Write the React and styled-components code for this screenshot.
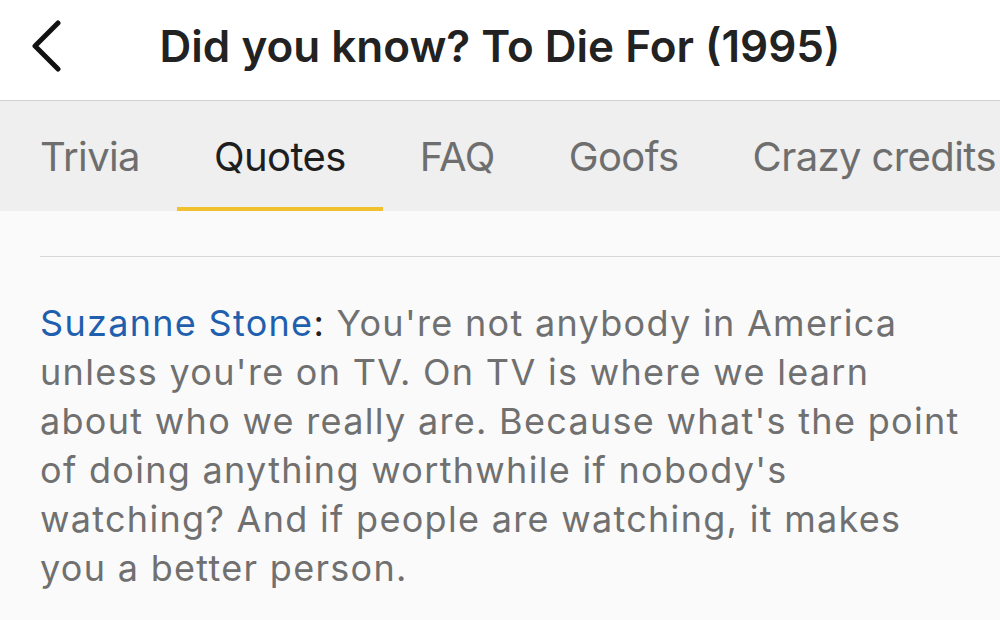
import React from "react";
import styled, { createGlobalStyle } from "styled-components";

const Global = createGlobalStyle`
  html, body { margin: 0; padding: 0; background: #fafafa; }
  body { font-family: Inter, "Noto Sans", sans-serif; -webkit-font-smoothing: antialiased; }
`;

const Page = styled.div`
  width: 1000px;
  height: 620px;
  overflow: hidden;
  background: #fafafa;
  display: flex;
  flex-direction: column;
`;

const Header = styled.header`
  height: 101px;
  flex: none;
  box-sizing: border-box;
  background: #ffffff;
  border-bottom: 1px solid #d2d2d2;
  display: grid;
  grid-template-columns: 100px 1fr 100px;
  align-items: center;
  padding-bottom: 8px;
`;

const BackButton = styled.button`
  border: 0;
  background: none;
  padding: 0 0 0 31px;
  height: 60px;
  display: flex;
  align-items: center;
  color: #111;
  cursor: pointer;
`;

const Title = styled.h1`
  margin: 0;
  text-align: center;
  font-size: 44px;
  font-weight: 600;
  color: #222;
  white-space: nowrap;
`;

const TabBar = styled.nav`
  height: 110px;
  flex: none;
  background: #efefef;
  display: flex;
  padding-left: 3px;
  white-space: nowrap;
  overflow: hidden;
`;

const Tab = styled.div`
  position: relative;
  flex: none;
  padding: 0 37px;
  display: flex;
  align-items: center;
  font-size: 40px;
  font-weight: 400;
  letter-spacing: -0.6px;
  color: ${(p) => (p.$active ? "#1e1e1e" : "#6e6e6e")};
  &::after {
    content: "";
    display: ${(p) => (p.$active ? "block" : "none")};
    position: absolute;
    left: 0;
    right: 0;
    bottom: 0;
    height: 4px;
    background: #f0c02e;
  }
`;

const Content = styled.main`
  flex: 1;
  padding: 45px 0 0 40px;
`;

const Divider = styled.hr`
  margin: 0;
  border: 0;
  border-top: 1px solid #d6d6d6;
`;

const Quote = styled.p`
  margin: 42px 0 0;
  font-size: 36px;
  line-height: 49px;
  letter-spacing: 1.3px;
  color: #707070;
  white-space: nowrap;
`;

const Speaker = styled.a`
  color: #1f5fae;
  text-decoration: none;
`;

const Colon = styled.span`
  color: #222;
`;

const tabs = ["Trivia", "Quotes", "FAQ", "Goofs", "Crazy credits"];

export default function App() {
  return (
    <Page>
      <Global />
      <Header>
        <BackButton aria-label="Back">
          <svg width="32" height="52" viewBox="0 0 32 52" fill="none">
            <path d="M27 3 L4 26 L27 49" stroke="currentColor" strokeWidth="5" strokeLinecap="round" strokeLinejoin="round" />
          </svg>
        </BackButton>
        <Title>Did you know? To Die For (1995)</Title>
        <div />
      </Header>
      <TabBar>
        {tabs.map((t) => (
          <Tab key={t} $active={t === "Quotes"}>{t}</Tab>
        ))}
      </TabBar>
      <Content>
        <Divider />
        <Quote>
          <Speaker href="#">Suzanne Stone</Speaker><Colon>:</Colon> You're not anybody in America<br />
          unless you're on TV. On TV is where we learn<br />
          about who we really are. Because what's the point<br />
          of doing anything worthwhile if nobody's<br />
          watching? And if people are watching, it makes<br />
          you a better person.
        </Quote>
      </Content>
    </Page>
  );
}
